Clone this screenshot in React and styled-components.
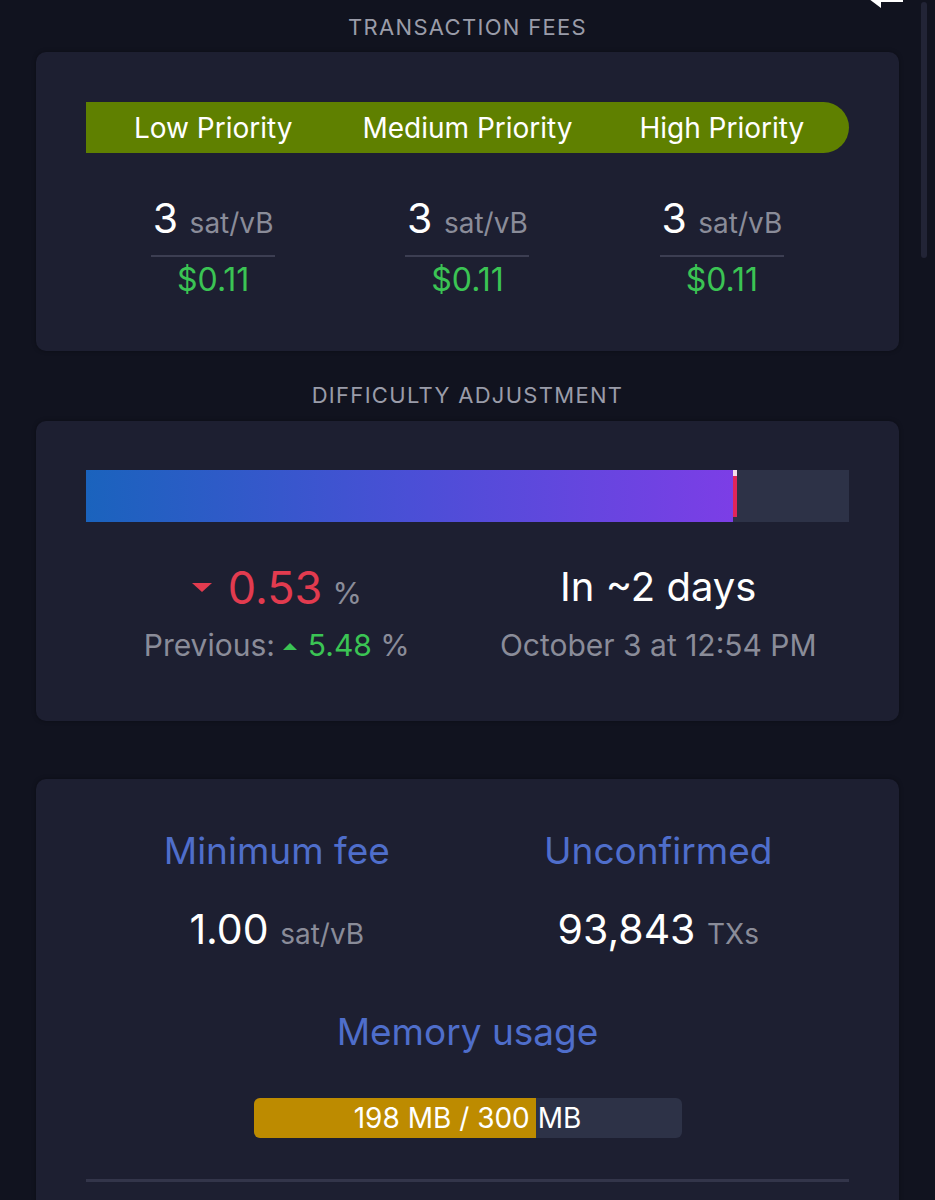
import React from 'react'
import styled, { createGlobalStyle } from 'styled-components'

const Global = createGlobalStyle`
  html, body {
    margin: 0;
    padding: 0;
    background: #11131f;
  }
  body {
    font-family: Inter, "Noto Sans", sans-serif;
    color: #fff;
    overflow: hidden;
  }
`

const fees = [
  { label: 'Low Priority', sat: 3, usd: '$0.11' },
  { label: 'Medium Priority', sat: 3, usd: '$0.11' },
  { label: 'High Priority', sat: 3, usd: '$0.11' },
]

const App = () => {
  return (
    <>
      <Global />
      <Page>
        <CornerIcon>
          <svg width="40" height="40" viewBox="0 0 40 40">
            <path d="M30 2 L36 2 L36 30 L14 30 L14 36 L2 27 L14 18 L14 24 L30 24 Z" fill="#fff" />
          </svg>
        </CornerIcon>
        <ScrollThumb />

        <Title>TRANSACTION FEES</Title>
        <Card $pad="50px 50px 53px">
          <PriorityBar>
            {fees.map((f) => (
              <PriorityLabel key={f.label}>{f.label}</PriorityLabel>
            ))}
          </PriorityBar>
          <FeeGrid>
            {fees.map((f) => (
              <FeeItem key={f.label}>
                <FeeValue>
                  {f.sat} <Unit>sat/vB</Unit>
                </FeeValue>
                <FeeUsd>{f.usd}</FeeUsd>
              </FeeItem>
            ))}
          </FeeGrid>
        </Card>

        <Title $top="18px" $lh="52px">DIFFICULTY ADJUSTMENT</Title>
        <Card $pad="49px 50px 58px">
          <DiffBar>
            <DiffFill style={{ width: '84.8%' }} />
            <DiffMarker />
          </DiffBar>
          <TwoCols $top="40px">
            <Col>
              <BigChange>
                <Arrow $down /> 0.53 <Pct>%</Pct>
              </BigChange>
              <SubLine>
                Previous: <Green><Arrow /> 5.48</Green> <span>%</span>
              </SubLine>
            </Col>
            <Col>
              <WhenText>In ~2 days</WhenText>
              <SubLine>October 3 at 12:54 PM</SubLine>
            </Col>
          </TwoCols>
        </Card>

        <Card $pad="51px 50px 40px" $top="58px">
          <TwoCols>
            <Col>
              <StatTitle>Minimum fee</StatTitle>
              <StatValue>
                1.00 <Unit>sat/vB</Unit>
              </StatValue>
            </Col>
            <Col>
              <StatTitle>Unconfirmed</StatTitle>
              <StatValue>
                93,843 <Unit>TXs</Unit>
              </StatValue>
            </Col>
          </TwoCols>
          <StatTitle $top="55px">Memory usage</StatTitle>
          <MemBar>
            <MemFill style={{ width: `${(198 / 300) * 100}%` }} />
            <MemText>198 MB / 300 MB</MemText>
          </MemBar>
          <Divider />
        </Card>
      </Page>
    </>
  )
}

export default App

const Page = styled.div`
  position: relative;
  padding: 0 36px;
  min-height: 1200px;
`

const CornerIcon = styled.div`
  position: absolute;
  top: -28px;
  right: 28px;
  width: 40px;
  height: 40px;
`

const ScrollThumb = styled.div`
  position: absolute;
  top: 2px;
  right: 8px;
  width: 6px;
  height: 256px;
  border-radius: 3px;
  background: #222436;
`

const Title = styled.div`
  margin-top: ${(p) => p.$top || '0'};
  height: 52px;
  line-height: ${(p) => p.$lh || '54px'};
  text-align: center;
  font-size: 22px;
  letter-spacing: 1.3px;
  color: #9a9ca9;
`

const Card = styled.div`
  margin-top: ${(p) => p.$top || '0'};
  background: #1d1f31;
  border-radius: 10px;
  padding: ${(p) => p.$pad};
  box-shadow: 0 0 4px rgba(0, 0, 0, 0.35);
`

const PriorityBar = styled.div`
  display: grid;
  grid-template-columns: repeat(3, 1fr);
  height: 51px;
  align-items: center;
  background: #5f8000;
  border-radius: 0 26px 26px 0;
`

const PriorityLabel = styled.div`
  text-align: center;
  font-size: 28px;
  color: #fff;
`

const FeeGrid = styled.div`
  display: grid;
  grid-template-columns: repeat(3, 1fr);
  margin-top: 44px;
`

const FeeItem = styled.div`
  display: flex;
  flex-direction: column;
  align-items: center;
`

const FeeValue = styled.div`
  width: 124px;
  text-align: center;
  font-size: 41px;
  line-height: 42px;
  padding-bottom: 11px;
  border-bottom: 2px solid #3c3e52;
  white-space: nowrap;
`

const Unit = styled.span`
  font-size: 28px;
  color: #8a8c99;
`

const FeeUsd = styled.div`
  margin-top: 5px;
  font-size: 32px;
  line-height: 36px;
  color: #3bc454;
`

const DiffBar = styled.div`
  position: relative;
  display: flex;
  height: 52px;
  background: #2d3247;
`

const DiffFill = styled.div`
  height: 100%;
  background: linear-gradient(to right, #1a63bd, #4a4fd6 50%, #7c3ee6);
`

const DiffMarker = styled.div`
  width: 4px;
  height: 47px;
  background: #e0255a;
  border-top: 6px solid #f3dcea;
  box-sizing: border-box;
`

const TwoCols = styled.div`
  display: grid;
  grid-template-columns: 1fr 1fr;
  margin-top: ${(p) => p.$top || '0'};
`

const Col = styled.div`
  display: flex;
  flex-direction: column;
  align-items: center;
`

const BigChange = styled.div`
  display: flex;
  align-items: center;
  gap: 10px;
  height: 50px;
  font-size: 45px;
  color: #e23b4f;
`

const Pct = styled.span`
  font-size: 30px;
  color: #8a8c99;
  margin-top: 12px;
`

const Arrow = styled.span`
  display: inline-block;
  width: 0;
  height: 0;
  border-left: ${(p) => (p.$down ? '10px' : '7px')} solid transparent;
  border-right: ${(p) => (p.$down ? '10px' : '7px')} solid transparent;
  ${(p) =>
    p.$down
      ? 'border-top: 9px solid #e23b4f;'
      : 'border-bottom: 7px solid #3bc454; vertical-align: 6px;'}
  margin-right: ${(p) => (p.$down ? '6px' : '2px')};
`

const SubLine = styled.div`
  margin-top: 15px;
  font-size: 30px;
  line-height: 36px;
  color: #8a8c99;
  white-space: nowrap;
`

const Green = styled.span`
  color: #3bc454;
`

const WhenText = styled.div`
  height: 50px;
  line-height: 50px;
  font-size: 40px;
  color: #fff;
`

const StatTitle = styled.div`
  margin-top: ${(p) => p.$top || '0'};
  text-align: center;
  font-size: 37px;
  line-height: 42px;
  color: #4f6ecb;
`

const StatValue = styled.div`
  margin-top: 35px;
  font-size: 41px;
  line-height: 44px;
  color: #fff;
  white-space: nowrap;
`

const MemBar = styled.div`
  position: relative;
  width: 428px;
  height: 40px;
  margin: 45px auto 0;
  border-radius: 6px;
  background: #2d3247;
  overflow: hidden;
`

const MemFill = styled.div`
  height: 100%;
  background: #bd8b00;
`

const MemText = styled.div`
  position: absolute;
  inset: 0;
  display: flex;
  align-items: center;
  justify-content: center;
  font-size: 28px;
  color: #fff;
`

const Divider = styled.div`
  margin-top: 41px;
  height: 3px;
  background: #33354a;
`
